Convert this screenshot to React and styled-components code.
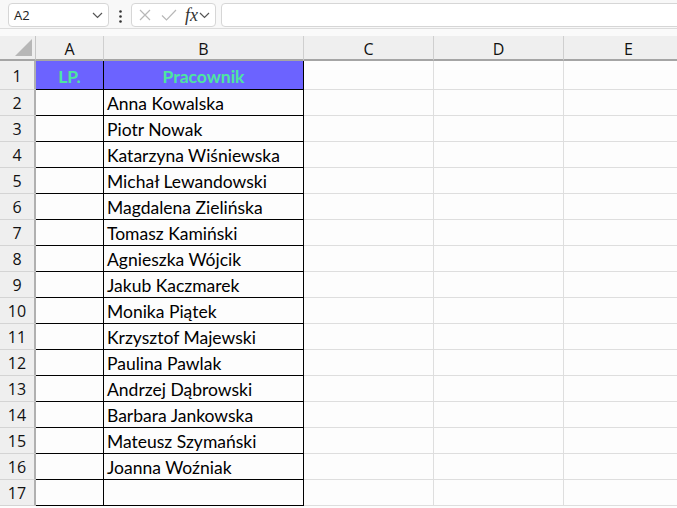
import React from 'react';
import styled, { createGlobalStyle } from 'styled-components';

const names = [
	'Anna Kowalska',
	'Piotr Nowak',
	'Katarzyna Wiśniewska',
	'Michał Lewandowski',
	'Magdalena Zielińska',
	'Tomasz Kamiński',
	'Agnieszka Wójcik',
	'Jakub Kaczmarek',
	'Monika Piątek',
	'Krzysztof Majewski',
	'Paulina Pawlak',
	'Andrzej Dąbrowski',
	'Barbara Jankowska',
	'Mateusz Szymański',
	'Joanna Woźniak',
	'',
];

const columns = ['A', 'B', 'C', 'D', 'E'];

const GlobalStyle = createGlobalStyle`
	html, body {
		margin: 0;
		padding: 0;
		background: #fdfdfd;
		overflow: hidden;
	}
	body {
		font-family: 'Open Sans', 'Noto Sans', sans-serif;
	}
`;

const Page = styled.div`
	width: 677px;
	height: 508px;
	display: flex;
	flex-direction: column;
	background: #fdfdfd;
	overflow: hidden;
`;

const Toolbar = styled.div`
	height: 29px;
	display: flex;
	align-items: flex-end;
	padding: 0 0 0 8px;
	background: #f8f8f8;
	border-bottom: 1px solid #dcdcdc;
	box-sizing: border-box;
`;

const Box = styled.div`
	height: 24px;
	margin-bottom: 1px;
	box-sizing: border-box;
	background: #fff;
	border: 1px solid #d6d6d6;
	border-radius: 4px;
	display: flex;
	align-items: center;
	width: ${(p) => p.$w || 'auto'};
	flex: ${(p) => (p.$grow ? 1 : 'none')};
	margin-right: ${(p) => (p.$grow ? '-4px' : '0')};
`;

const NameText = styled.span`
	flex: 1;
	padding-left: 5px;
	font-size: 13px;
	color: #222;
`;

const Dots = styled.div`
	width: 22px;
	height: 24px;
	display: flex;
	align-items: center;
	justify-content: center;
`;

const Band = styled.div`
	height: 7px;
	background: #fafafa;
`;

const Grid = styled.div`
	display: grid;
	grid-template-columns: 36px 68px 200px 130px 130px 130px;
	grid-template-rows: 25px 29px repeat(16, 26px);
`;

const Corner = styled.div`
	background: #efefef;
	border-right: 1px solid #c6c6c6;
	border-bottom: 2px solid #a5a5a5;
	box-sizing: border-box;
	position: relative;
`;

const ColHead = styled.div`
	background: #efefef;
	border-bottom: 2px solid #a5a5a5;
	border-right: 1px solid #cfcfcf;
	box-sizing: border-box;
	display: flex;
	align-items: center;
	justify-content: center;
	font-size: 16px;
	color: #111;
	padding-top: 2px;
`;

const RowHead = styled.div`
	background: #efefef;
	border-right: 2px solid #b0b0b0;
	border-bottom: 1px solid #d4d4d4;
	box-sizing: border-box;
	display: flex;
	align-items: center;
	justify-content: center;
	font-size: 16px;
	color: #111;
	padding-top: 1px;
`;

const Cell = styled.div`
	box-sizing: border-box;
	border-right: 1px solid ${(p) => (p.$boxed ? '#000' : '#dedede')};
	border-bottom: 1px solid ${(p) => (p.$boxed ? '#000' : '#dedede')};
	background: ${(p) => (p.$head ? '#6c63ff' : 'transparent')};
	color: ${(p) => (p.$head ? '#4de6a0' : '#000')};
	font-weight: ${(p) => (p.$head ? 700 : 400)};
	font-family: 'Lato', 'Open Sans', sans-serif;
	font-size: 17.5px;
	display: flex;
	align-items: center;
	justify-content: ${(p) => (p.$head ? 'center' : 'flex-start')};
	padding-left: ${(p) => (p.$head ? '0' : '3px')};
	padding-top: 2px;
	white-space: nowrap;
	overflow: hidden;
`;

const Chevron = ({ x = 0 }) => (
	<svg width="11" height="7" viewBox="0 0 11 7" style={{ marginLeft: x }}>
		<path d="M1 1l4.5 4.5L10 1" fill="none" stroke="#555" strokeWidth="1.2" />
	</svg>
);

const FxText = styled.span`
	margin-left: 8px;
	font-family: 'Liberation Serif', serif;
	font-style: italic;
	font-size: 18px;
	color: #333;
	line-height: 1;
`;

const FormulaIcons = () => (
	<>
		<svg width="14" height="14" viewBox="0 0 14 14" style={{ marginLeft: 6 }}>
			<path d="M2 2l10 10M12 2L2 12" stroke="#b8b8b8" strokeWidth="1.2" />
		</svg>
		<svg width="16" height="14" viewBox="0 0 16 14" style={{ marginLeft: 9 }}>
			<path d="M1 7.5l4.5 4.5L15 2" fill="none" stroke="#b8b8b8" strokeWidth="1.2" />
		</svg>
		<FxText>fx</FxText>
		<Chevron x={1} />
	</>
);

const App = () => {
	return (
		<Page>
			<GlobalStyle />
			<Toolbar>
				<Box $w="101px">
					<NameText>A2</NameText>
					<Chevron />
					<span style={{ width: 5 }} />
				</Box>
				<Dots>
					<svg width="3" height="13" viewBox="0 0 3 13">
						<circle cx="1.5" cy="1.5" r="1.3" fill="#333" />
						<circle cx="1.5" cy="6.5" r="1.3" fill="#333" />
						<circle cx="1.5" cy="11.5" r="1.3" fill="#333" />
					</svg>
				</Dots>
				<Box $w="85px">
					<FormulaIcons />
				</Box>
				<span style={{ width: 5 }} />
				<Box $grow />
			</Toolbar>
			<Band />
			<Grid>
				<Corner>
					<svg
						width="17"
						height="17"
						viewBox="0 0 17 17"
						style={{ position: 'absolute', right: 3, bottom: 3 }}
					>
						<path d="M17 0V17H0Z" fill="#b7b7b7" />
					</svg>
				</Corner>
				{columns.map((c) => (
					<ColHead key={c}>{c}</ColHead>
				))}
				<RowHead>1</RowHead>
				<Cell $head $boxed>
					LP.
				</Cell>
				<Cell $head $boxed>
					Pracownik
				</Cell>
				<Cell />
				<Cell />
				<Cell />
				{names.map((n, i) => (
					<React.Fragment key={i}>
						<RowHead>{i + 2}</RowHead>
						<Cell $boxed />
						<Cell $boxed>{n}</Cell>
						<Cell />
						<Cell />
						<Cell />
					</React.Fragment>
				))}
			</Grid>
		</Page>
	);
};

export default App;
